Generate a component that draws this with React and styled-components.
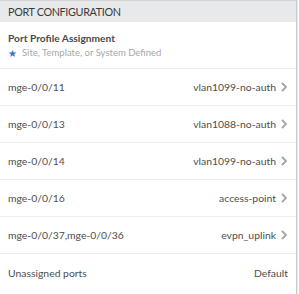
import React from 'react';
import styled, { createGlobalStyle } from 'styled-components';

const Global = createGlobalStyle`
  html, body {
    margin: 0;
    padding: 0;
    background: #ffffff;
  }
  body {
    font-family: Lato, 'Noto Sans', sans-serif;
  }
`;

const Panel = styled.div`
  width: 297px;
  height: 294px;
  box-sizing: border-box;
  border-top: 1px solid #d2d3d5;
  border-right: 1px solid #c9cacc;
  box-shadow: 1px 0 1px rgba(0, 0, 0, 0.08);
  overflow: hidden;
  color: #444;
`;

const Header = styled.header`
  height: 21px;
  display: flex;
  align-items: center;
  padding: 0 8px;
  background: #e8e9eb;

  h2 {
    margin: 0;
    font-size: 10.8px;
    font-weight: 400;
    letter-spacing: -0.35px;
    color: #3a3a3a;
  }
`;

const Intro = styled.div`
  height: 47px;
  box-sizing: border-box;
  padding: 10px 8px 0;
  border-bottom: 1px solid #ececec;

  h3 {
    margin: 0;
    font-size: 10.2px;
    font-weight: 700;
    color: #4a4a4a;
    line-height: 13px;
  }
`;

const Note = styled.p`
  margin: 1px 0 0;
  display: flex;
  align-items: center;
  gap: 5px;
  font-size: 9.5px;
  color: #a8a8a8;
  line-height: 13px;
`;

const Star = styled.span`
  color: #2e79be;
  font-size: 10px;
  line-height: 1;
`;

const Row = styled.div`
  height: 37px;
  box-sizing: border-box;
  display: flex;
  align-items: center;
  justify-content: space-between;
  padding: 0 ${p => (p.$plain ? '8px' : '9px')} 0 8px;
  border-bottom: ${p => (p.$last ? 'none' : '1px solid #ececec')};
  font-size: 10.4px;
  color: #4d4d4d;
`;

const Value = styled.span`
  display: flex;
  align-items: center;
  gap: 5px;
`;

const Chevron = () => (
  <svg width="6" height="10" viewBox="0 0 6 10">
    <path d="M1 1 L5 5 L1 9" fill="none" stroke="#a5a5a5" strokeWidth="1.8" />
  </svg>
);

const rows = [
  { port: 'mge-0/0/11', profile: 'vlan1099-no-auth' },
  { port: 'mge-0/0/13', profile: 'vlan1088-no-auth' },
  { port: 'mge-0/0/14', profile: 'vlan1099-no-auth' },
  { port: 'mge-0/0/16', profile: 'access-point' },
  { port: 'mge-0/0/37,mge-0/0/36', profile: 'evpn_uplink' },
];

export default function App() {
  return (
    <>
      <Global />
      <Panel>
        <Header>
          <h2>PORT CONFIGURATION</h2>
        </Header>
        <Intro>
          <h3>Port Profile Assignment</h3>
          <Note>
            <Star>★</Star>
            Site, Template, or System Defined
          </Note>
        </Intro>
        {rows.map(r => (
          <Row key={r.port}>
            <span>{r.port}</span>
            <Value>
              {r.profile}
              <Chevron />
            </Value>
          </Row>
        ))}
        <Row $last $plain>
          <span>Unassigned ports</span>
          <Value>Default</Value>
        </Row>
      </Panel>
    </>
  );
}
